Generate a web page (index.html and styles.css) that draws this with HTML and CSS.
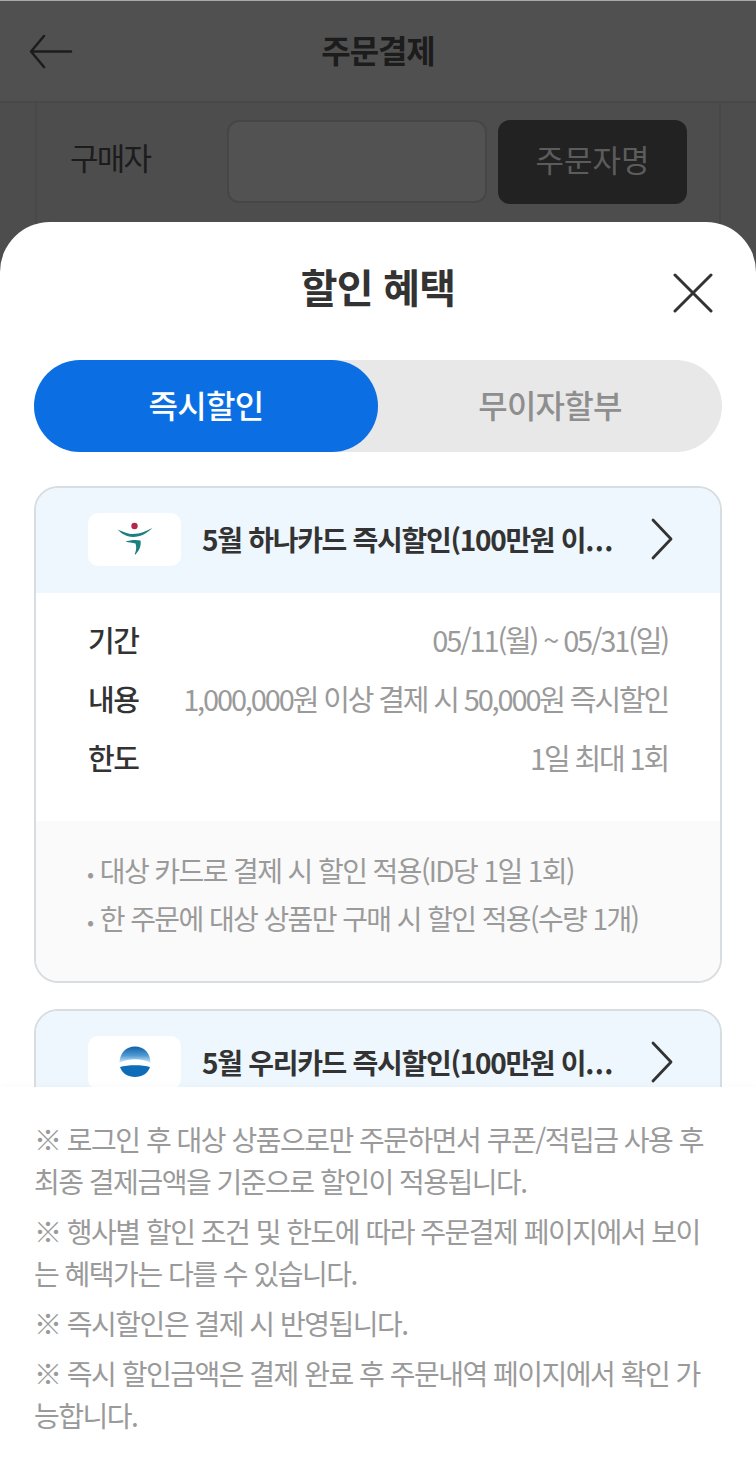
FILE: index.html
```html
<!DOCTYPE html>
<html lang="ko">
<head>
<meta charset="utf-8">
<title>주문결제</title>
<link rel="stylesheet" href="styles.css">
</head>
<body>
<div class="page">
  <header class="topbar">
    <svg class="back" width="44" height="36" viewBox="0 0 44 36"><path d="M15 2 L2 17.500 L15 33 M2 17.500 H42" fill="none" stroke="#1c1c1c" stroke-width="2.500" stroke-linecap="round" stroke-linejoin="round"/></svg>
    <h1 class="topbar-title">주문결제</h1>
  </header>
  <section class="buyer">
    <div class="buyer-label">구매자</div>
    <div class="buyer-input"></div>
    <div class="buyer-btn">주문자명</div>
  </section>
</div>
<div class="sheet">
  <div class="sheet-head">
    <h2 class="sheet-title">할인 혜택</h2>
    <svg class="close" width="40" height="40" viewBox="0 0 40 40"><path d="M2 2 L38 38 M38 2 L2 38" stroke="#333" stroke-width="3" stroke-linecap="round"/></svg>
  </div>
  <div class="tabs">
    <div class="tab tab-on">즉시할인</div>
    <div class="tab">무이자할부</div>
  </div>
  <div class="list">
    <article class="card">
      <div class="card-head">
        <div class="logo">
          <svg width="36" height="36" viewBox="0 0 36 36"><circle cx="17.500" cy="5" r="3.200" fill="#b5264c"/><path d="M0.500 8.500 C7 11 11 13 16 13 C23 13 29 10 35.500 7 C30 12 24 16 16 16 C9 16 4 12 0.500 8.500 Z" fill="#1c7f80"/><path d="M8.500 20.500 C13 19 19 18.500 23.500 19.500 C24.500 25 22 30 18.500 33.500 C18 33.800 17.500 33.500 17.800 33 C19.500 29 19.500 25 18.500 22.500 C15 21.800 11.500 21.500 8.500 20.500 Z" fill="#1c7f80"/></svg>
        </div>
        <div class="card-title">5월 하나카드 즉시할인(100만원 이<span class="dots">...</span></div>
        <svg class="chev" width="24" height="42" viewBox="0 0 24 42"><path d="M3 2 L21 21 L3 40" fill="none" stroke="#333" stroke-width="2.800" stroke-linecap="round" stroke-linejoin="round"/></svg>
      </div>
      <dl class="info">
        <div class="info-row"><dt>기간</dt><dd>05/11(월) ~ 05/31(일)</dd></div>
        <div class="info-row"><dt>내용</dt><dd>1,000,000원 이상 결제 시 50,000원 즉시할인</dd></div>
        <div class="info-row"><dt>한도</dt><dd>1일 최대 1회</dd></div>
      </dl>
      <ul class="terms">
        <li>대상 카드로 결제 시 할인 적용(ID당 1일 1회)</li>
        <li>한 주문에 대상 상품만 구매 시 할인 적용(수량 1개)</li>
      </ul>
    </article>
    <article class="card">
      <div class="card-head">
        <div class="logo">
          <svg width="36" height="36" viewBox="0 0 36 36"><defs><linearGradient id="wt" x1="0" y1="0" x2="0" y2="1"><stop offset="0" stop-color="#0f5fa6"/><stop offset="0.550" stop-color="#4f9ad4"/><stop offset="1" stop-color="#dceefa"/></linearGradient></defs><path d="M2.500 19 C2.500 9 9 2.500 18 2.500 C27 2.500 33.500 9 33.500 19 C26 14 10 14 2.500 19 Z" fill="url(#wt)"/><path d="M3 23 C10 20.500 26 20.500 33 23 C31 29.500 25 33 18 33 C11 33 5 29.500 3 23 Z" fill="#0f6cb8"/></svg>
        </div>
        <div class="card-title">5월 우리카드 즉시할인(100만원 이<span class="dots">...</span></div>
        <svg class="chev" width="24" height="42" viewBox="0 0 24 42"><path d="M3 2 L21 21 L3 40" fill="none" stroke="#333" stroke-width="2.800" stroke-linecap="round" stroke-linejoin="round"/></svg>
      </div>
    </article>
  </div>
  <div class="notes">
    <p>※ 로그인 후 대상 상품으로만 주문하면서 쿠폰/적립금 사용 후 최종 결제금액을 기준으로 할인이 적용됩니다.</p>
    <p>※ 행사별 할인 조건 및 한도에 따라 주문결제 페이지에서 보이는 혜택가는 다를 수 있습니다.</p>
    <p>※ 즉시할인은 결제 시 반영됩니다.</p>
    <p>※ 즉시 할인금액은 결제 완료 후 주문내역 페이지에서 확인 가능합니다.</p>
  </div>
</div>
</body>
</html>
```
FILE: styles.css
```css
* { box-sizing: border-box; }
html, body { margin: 0; padding: 0; }
body {
  width: 756px;
  height: 1474px;
  overflow: hidden;
  position: relative;
  background: #4d4d4d;
  font-family: "Noto Sans CJK KR", "Noto Sans", sans-serif;
  color: #333;
}
.page { height: 1474px; }
.topbar {
  height: 103px;
  background: #505050;
  border-top: 1px solid #a8a8a8;
  border-bottom: 2px solid #484848;
  padding-bottom: 5px;
  display: flex;
  align-items: center;
  justify-content: center;
  position: relative;
}
.back { position: absolute; left: 29px; top: 33px; }
.topbar-title {
  margin: 0;
  font-size: 32px;
  font-weight: 700;
  letter-spacing: -1.100px;
  color: #1c1c1c;
  line-height: 1;
}
.buyer {
  margin: 0 35px;
  height: 400px;
  border-left: 2px solid #484848;
  border-right: 2px solid #484848;
  padding: 17px 32px 0 33px;
  display: flex;
  align-items: flex-start;
}
.buyer-label {
  width: 157px;
  height: 78px;
  font-size: 31px;
  letter-spacing: -1.800px;
  line-height: 74px;
  color: #1c1c1c;
}
.buyer-input {
  width: 260px;
  height: 83px;
  border: 2px solid #464646;
  border-radius: 12px;
  background: #525252;
}
.buyer-btn {
  width: 189px;
  height: 84px;
  margin-left: 11px;
  background: #222;
  border-radius: 12px;
  color: #5c5c5c;
  font-size: 31px;
  letter-spacing: 0;
  line-height: 78px;
  text-align: center;
}
.sheet {
  position: absolute;
  left: 0;
  right: 0;
  top: 222px;
  bottom: 0;
  background: #fff;
  border-radius: 50px 50px 0 0;
  display: flex;
  flex-direction: column;
}
.sheet-head {
  height: 138px;
  padding-top: 35px;
  position: relative;
  text-align: center;
}
.sheet-title {
  margin: 0;
  font-size: 40px;
  font-weight: 700;
  letter-spacing: -0.800px;
  line-height: 58px;
  color: #333;
}
.close { position: absolute; left: 673px; top: 51px; }
.tabs {
  margin: 0 34px;
  height: 92px;
  border-radius: 46px;
  background: #e8e8e8;
  display: flex;
  flex: none;
}
.tab {
  width: 344px;
  border-radius: 46px;
  text-align: center;
  font-size: 32px;
  line-height: 88px;
  letter-spacing: -0.700px;
  color: #8e8e8e;
  font-weight: 500;
}
.tab-on { background: #0b6fe3; color: #fff; }
.list {
  margin-top: 34px;
  height: 601px;
  flex: none;
  overflow: hidden;
  padding: 0 34px;
}
.card {
  border: 2px solid #d7dde0;
  border-radius: 24px;
  overflow: hidden;
  background: #fff;
  margin-bottom: 26px;
}
.card-head {
  height: 105px;
  background: #edf7fd;
  display: flex;
  align-items: center;
  padding-left: 52px;
  padding-right: 46px;
  padding-bottom: 3px;
}
.logo {
  width: 93px;
  height: 53px;
  flex: none;
  background: #fff;
  border-radius: 10px;
  display: flex;
  align-items: center;
  justify-content: center;
}
.card-title {
  margin-left: 21px;
  font-size: 28px;
  font-weight: 700;
  letter-spacing: -1.300px;
  color: #333;
  white-space: nowrap;
}
.dots { letter-spacing: 0.300px; }
.chev { margin-left: auto; flex: none; }
.info {
  margin: 0;
  height: 228px;
  padding: 16px 52px 0;
}
.info-row {
  display: flex;
  justify-content: space-between;
  height: 59px;
  align-items: center;
  font-size: 29px;
  letter-spacing: -1.500px;
}
.info-row dt { color: #333; font-weight: 500; }
.info-row dd { margin: 0; color: #9a9a9a; letter-spacing: -2.150px; }
.terms {
  margin: 0;
  padding: 25px 50px 0;
  height: 160px;
  background: #fafafa;
  list-style: none;
  font-size: 28px;
  letter-spacing: -1.600px;
  color: #9a9a9a;
}
.terms li { height: 48px; line-height: 48px; }
.terms li::before { content: ". "; font-weight: 700; vertical-align: 4px; line-height: 0; }
.notes {
  flex: 1;
  background: #fff;
  padding: 31px 34px 0;
  font-size: 28px;
  letter-spacing: -1.500px;
  line-height: 42px;
  color: #9a9a9a;
  box-shadow: 0 -2px 6px rgba(0, 0, 0, 0.02);
}
.notes p { margin: 0 0 8px; word-break: break-all; }
```
